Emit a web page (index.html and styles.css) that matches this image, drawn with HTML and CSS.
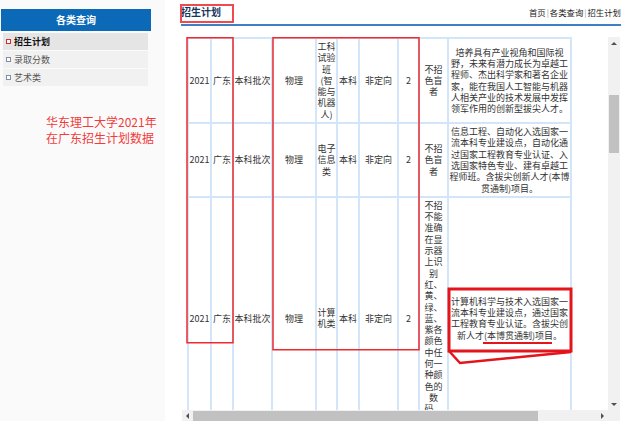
FILE: index.html
```html
<!DOCTYPE html>
<html lang="zh-CN">
<head>
<meta charset="utf-8">
<title>招生计划</title>
<link rel="stylesheet" href="styles.css">
</head>
<body>
<div class="page">
  <aside class="sidebar">
    <div class="side-title">各类查询</div>
    <ul class="side-menu">
      <li class="active"><i class="bullet"></i>招生计划</li>
      <li><i class="bullet"></i>录取分数</li>
      <li><i class="bullet"></i>艺术类</li>
    </ul>
    <p class="note">华东理工大学2021年<br>在广东招生计划数据</p>
  </aside>
  <main class="main">
    <div class="head">
      <h1 class="title">招生计划<span class="mark-title"></span></h1>
      <div class="crumbs">首页<span class="sep">|</span>各类查询<span class="sep">|</span>招生计划</div>
    </div>
    <div class="scroller">
      <div class="viewport">
        <div class="tablewrap">
          <table class="plan">
            <colgroup>
              <col class="c1"><col class="c2"><col class="c3"><col class="c4"><col class="c5">
              <col class="c6"><col class="c7"><col class="c8"><col class="c9"><col class="c10">
            </colgroup>
            <tbody>
              <tr>
                <td>2021</td><td>广东</td><td>本科批次</td><td>物理</td>
                <td>工科试验班(智能与机器人)</td><td>本科</td><td>非定向</td><td>2</td>
                <td class="req">不招色盲者</td>
                <td class="desc">培养具有产业视角和国际视野，未来有潜力成长为卓越工程师、杰出科学家和著名企业家，能在我国人工智能与机器人相关产业的技术发展中发挥领军作用的创新型拔尖人才。</td>
              </tr>
              <tr>
                <td>2021</td><td>广东</td><td>本科批次</td><td>物理</td>
                <td>电子信息类</td><td>本科</td><td>非定向</td><td>2</td>
                <td class="req">不招色盲者</td>
                <td class="desc">信息工程、自动化入选国家一流本科专业建设点，自动化通过国家工程教育专业认证、入选国家特色专业、建有卓越工程师班。含拔尖创新人才(本博贯通制)项目。</td>
              </tr>
              <tr>
                <td>2021</td><td>广东</td><td>本科批次</td><td>物理</td>
                <td>计算机类</td><td>本科</td><td>非定向</td><td>2</td>
                <td class="req">不招不能准确在显示器上识别红、黄、绿、蓝、紫各颜色中任何一种颜色的数码、图案者</td>
                <td class="desc">计算机科学与技术入选国家一流本科专业建设点，通过国家工程教育专业认证。含拔尖创新人才(本博贯通制)项目。</td>
              </tr>
            </tbody>
          </table>
          <svg class="marks" width="400" height="340" viewBox="0 0 400 340">
            <rect x="0" y="0.75" width="46" height="305" fill="none" stroke="#ec2a2f" stroke-width="1.5"/>
            <rect x="86" y="0.75" width="146" height="312" fill="none" stroke="#ec2a2f" stroke-width="1.5"/>
            <rect x="262" y="252" width="122" height="62" fill="none" stroke="#e3141c" stroke-width="3"/>
            <polyline points="262,314 273,326 384,315" fill="none" stroke="#e3141c" stroke-width="2.5"/>
            <line x1="296" y1="306" x2="365" y2="306" stroke="#e3141c" stroke-width="2"/>
          </svg>
        </div>
      </div>
      <div class="vbar">
        <div class="arrow"><i class="tri tri-up"></i></div>
        <div class="vtrack"><div class="vthumb"></div></div>
        <div class="arrow"><i class="tri tri-down"></i></div>
      </div>
      <div class="hbar">
        <div class="harrow harrow-l"><i class="tri tri-left"></i></div>
        <div class="hthumb"></div>
        <div class="hspace"></div>
        <div class="harrow harrow-r"><i class="tri tri-right"></i></div>
      </div>
      <div class="corner"></div>
    </div>
  </main>
</div>
</body>
</html>
```

FILE: styles.css
```css
* { box-sizing: border-box; }
html, body { margin: 0; height: 421px; overflow: hidden; background: #fff; }
body { font-family: "Noto Sans CJK SC", "Noto Sans", sans-serif; color: #333; }

.page { display: flex; height: 421px; }

.sidebar { width: 165px; flex: none; background: #fafafa; padding-top: 9px; }
.side-title {
  margin-left: 1px; width: 150px; height: 22px; line-height: 22px;
  background: #0b69b7; color: #fff; font-weight: bold; font-size: 10px; text-align: center;
}
.side-menu { list-style: none; margin: 2px 0 0 3px; padding: 0; width: 145px; }
.side-menu li {
  height: 17px; margin-bottom: 1px; background: #f1f1f1;
  font-size: 9px; color: #555; display: flex; align-items: center;
}
.side-menu li.active { background: #e5e5e5; color: #111; font-weight: bold; }
.bullet { width: 5px; height: 5px; border: 1px solid #7f8fa6; background: #fff; margin: 0 3px; flex: none; }
.side-menu li.active .bullet { border-color: #d82b2b; }
.note { margin: 28px 0 0 46px; font-size: 12px; line-height: 16px; color: #f23b3b; white-space: nowrap; }

.main { flex: 1; min-width: 0; padding: 0 19px 0 16px; }
.head {
  display: flex; justify-content: space-between; align-items: center;
  height: 26px; border-bottom: 2px solid #3f7fc6;
}
.title {
  position: relative; margin: 0; font-size: 10px; line-height: 24px;
  font-weight: bold; color: #17375e;
}
.mark-title {
  position: absolute; left: -1px; top: 4px; width: 54px; height: 19px;
  border: 2px solid #ef4a4f;
}
.crumbs { font-size: 8.4px; line-height: 24px; color: #222; white-space: nowrap; }
.sep { color: #999; margin: 0 1px; font-size: 8px; }

.scroller {
  margin: 11px 1px 0 1px;
  display: grid;
  grid-template-columns: minmax(0, 1fr) 12px;
  grid-template-rows: 373px 12px;
}
.viewport { overflow: hidden; padding-left: 5px; background: #fff; }
.tablewrap { position: relative; width: max-content; }

.plan {
  border-collapse: collapse; table-layout: fixed; width: 383px;
  font-size: 9px; line-height: 11.3px; color: #333;
}
.plan td {
  border: 2px solid #d3e5f9; padding: 2px 0;
  text-align: center; vertical-align: middle;
}
.plan td.req { padding: 2px 3px; }
.plan td.desc { padding: 2px 0; }
.c1 { width: 23px; } .c2 { width: 22px; } .c3 { width: 39px; } .c4 { width: 44px; }
.c5 { width: 21px; } .c6 { width: 22px; } .c7 { width: 39px; } .c8 { width: 21px; }
.c9 { width: 29px; } .c10 { width: 123px; }

.marks { position: absolute; left: 0; top: 0; overflow: visible; pointer-events: none; }

.vbar { background: #f1f1f1; display: flex; flex-direction: column; }
.arrow { height: 12px; flex: none; display: flex; align-items: center; justify-content: center; }
.vtrack { flex: 1; }
.vthumb { margin: 46px 1px 0; height: 58px; background: #c1c1c1; }

.hbar { background: #f1f1f1; display: flex; }
.harrow { flex: none; display: flex; align-items: center; justify-content: center; }
.harrow-l { width: 11px; }
.harrow-r { width: 12px; }
.hthumb { width: 345px; margin: 1px 0; background: #c1c1c1; flex: none; }
.hspace { flex: 1; }
.corner { background: #f1f1f1; }

.tri { width: 0; height: 0; display: block; }
.tri-up { border-left: 3px solid transparent; border-right: 3px solid transparent; border-bottom: 3px solid #505050; }
.tri-down { border-left: 3px solid transparent; border-right: 3px solid transparent; border-top: 3px solid #505050; }
.tri-left { border-top: 3px solid transparent; border-bottom: 3px solid transparent; border-right: 3px solid #505050; }
.tri-right { border-top: 3px solid transparent; border-bottom: 3px solid transparent; border-left: 3px solid #505050; }
```
